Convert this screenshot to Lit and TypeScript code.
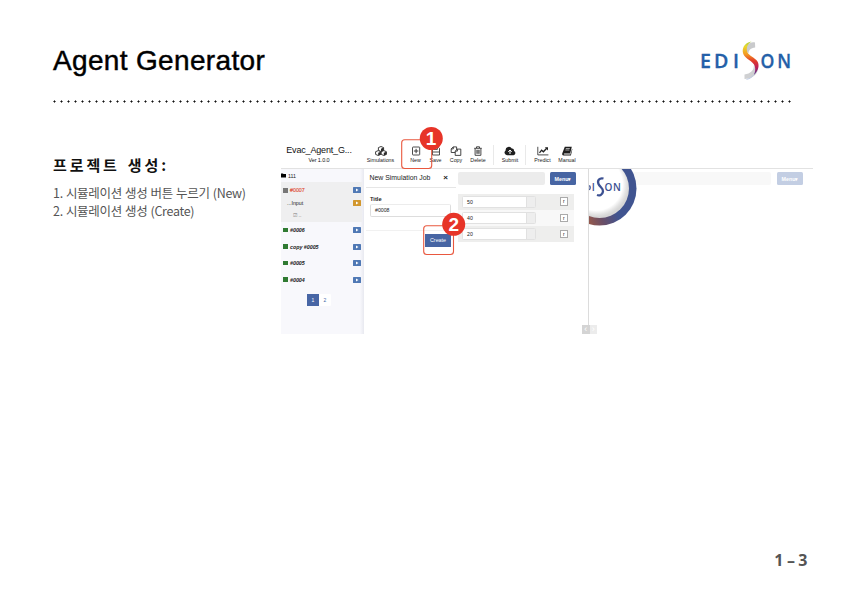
import { LitElement, html, svg, css } from "lit";
import { customElement } from "lit/decorators.js";

const FOLDER = svg`<path d="M0 1h4l1 1h5v7H0z"/>`;

const ICONS: Record<string, unknown> = {
  cubes: svg`<g fill="#fff" stroke="#2b2b2b" stroke-width=".9" stroke-linejoin="round"><path d="M6 .5l2.600 1.100v2.800L6 5.500 3.400 4.400V1.600z"/><path d="M3.200 4.600l2.600 1.100v2.700L3.200 9.500.6 8.400V5.700z"/><path d="M8.800 4.600l2.600 1.100v2.700L8.800 9.500 6.200 8.400V5.700z"/></g><path d="M3.400 1.600L6 2.700l2.600-1.100v2.800L6 5.500V2.700zM.6 5.700l2.600 1.100 2.600-1.100v2.700l-2.600 1.100V6.800zM6.200 5.700l2.600 1.100 2.600-1.100v2.700L8.800 9.500V6.800z" fill="#2b2b2b"/>`,
  plus: svg`<g fill="none" stroke="#3a3a3a"><rect x="2.500" y="1" width="7.200" height="8" rx=".6" stroke-width=".9"/><path d="M3.900 5h4.400M6.100 2.800v4.400" stroke-width="1"/></g>`,
  save: svg`<g fill="none" stroke="#3a3a3a" stroke-width=".9"><path d="M2.500 1h5.700l1.300 1.300V9h-7z"/><path d="M4 1v2.400h3.400V1M3 6h6"/></g>`,
  copy: svg`<g fill="#fff" stroke="#333" stroke-width=".9"><path d="M3.200.9h3.400v5.600H1.200V2.900zM3.300.9v2H1.200"/><path d="M7.300 3.100h3.500v6.300H5.200V5.100zM7.400 3.100v2H5.200"/></g>`,
  trash: svg`<g fill="none" stroke="#333" stroke-width=".9"><path d="M2.200 2.300h7.600M4.500 2V.8h3V2M3.100 2.500V9.300h5.800V2.500M4.900 3.800v4M6 3.800v4M7.100 3.800v4"/></g>`,
  cloud: svg`<path fill="#1f1f1f" d="M3 9.200A2.600 2.600 0 0 1 1.600 4.500 3.300 3.300 0 0 1 7.800 2.600 2.100 2.100 0 0 1 10 5a2.200 2.200 0 0 1-.4 4.200z"/><path d="M6 8V4.400M4.300 5.800L6 4l1.700 1.800" fill="none" stroke="#fff"/>`,
  chart: svg`<g fill="none" stroke="#222"><path d="M.8.8v8.100h10.600" stroke-width=".8"/><path d="M2.500 6.800l2.100-2.600 1.800 1.600 3.300-3.600" stroke-width="1.300"/></g><path d="M7.800 1.200h3.200v3.200z" fill="#222"/>`,
  book: svg`<path d="M3.800.7h7L9.200 7.400H3.400c-.8 0-.8 1 0 1h6L11 3l.4 0L9.900 9.400H2.600C1.200 9.400.9 8 1.400 6.900z" fill="#1f1f1f"/><path d="M4.800 2.500h4M4.400 4h4" stroke="#fff" stroke-width=".6"/>`,
};

const TOOLS: Array<[string, string] | null> = [
  ["cubes", "Simulations"],
  ["plus", "New"],
  ["save", "Save"],
  ["copy", "Copy"],
  ["trash", "Delete"],
  null,
  ["cloud", "Submit"],
  null,
  ["chart", "Predict"],
  ["book", "Manual"],
];

const JOBS = ["#0006", "copy #0005", "#0005", "#0004"];
const VALUES = ["50", "40", "20"];

@customElement("edison-logo")
class EdisonLogo extends LitElement {
  static styles = css`
    :host { display: block; width: 92px; height: 40px; }
    svg { display: block; overflow: visible; }
    text { font: 600 19.600px "Open Sans", sans-serif; fill: #2460a8; stroke: #2460a8; stroke-width: .3px; }
  `;
  render() {
    return html`<svg width="92" height="40" viewBox="0 0 92 40">
      <defs>
        <linearGradient id="s" x1="0" y1="0" x2="0" y2="1">
          <stop offset="0" stop-color="#a8cc3c" /><stop offset=".14" stop-color="#e9d92c" />
          <stop offset=".38" stop-color="#f39a24" /><stop offset=".58" stop-color="#e23a2a" />
          <stop offset=".78" stop-color="#b91d5c" /><stop offset="1" stop-color="#47308f" />
        </linearGradient>
      </defs>
      <text x="-1 12.900 31.900" y="27">EDI</text>
      <path d="M54 1.500c-6-1-10 3-9.300 8l3 3c-.5-3 2-5.500 6.500-6z" fill="#c9cacc" />
      <path d="M56 23c3 6-1 15-12.500 15v-4.500c6-1 9.500-4 9.300-9z" fill="#cfd0d2" />
      <path d="M50.500.6C43 2 40.500 8 42.300 13c2 5 9.700 7 11.500 12 .8 3 .5 6-1 9 4.500-4 6-9.500 3.700-13.500-2.500-4-8.500-5.500-10.200-9.500C45 7 46.500 3 50.500.6z" fill="url(#s)" />
      <path d="M52.500 34q-2.500 4-7 4.500" fill="none" stroke="#b6c5e2" stroke-width=".8" />
      <text transform="translate(59.600 27) scale(.9 1)" x="0 18.500" y="0">ON</text>
    </svg>`;
  }
}

@customElement("app-window")
class AppWindow extends LitElement {
  static styles = css`
    :host { display: block; width: 532px; height: 193px; font-family: "Liberation Sans", sans-serif; color: #222; }
    * { box-sizing: border-box; }
    div, span { white-space: nowrap; }
    svg { display: block; }
    .top { display: grid; grid-template-columns: 82px 1fr; height: 28px; border-bottom: 1px solid #e2e2e2; }
    .brand { text-align: center; padding: 4px 6px 0 0; font-size: 9px; line-height: 11px; color: #111; }
    .brand .name { letter-spacing: -.17px; }
    .brand .ver { font-size: 5.500px; line-height: 9px; letter-spacing: -.1px; }
    .tools { display: grid; grid-template-columns: 41px 23px 17px 24px 20px 10.500px 23px 8.500px 25px 24px; height: 27px; padding-top: 4.500px; }
    .tool { display: flex; flex-direction: column; align-items: center; font-size: 5.300px; line-height: 8px; color: #222; }
    .tool:first-child { padding-right: 6px; }
    .sep { justify-self: center; width: 1px; height: 20px; background: #e9e9e9; margin-top: -1px; }
    .body { display: grid; grid-template-columns: 83px 225px 1fr; height: 165px; }
    .side { background: linear-gradient(90deg, #f8f8fc 79px, #e8e9f0 83px); font-size: 5.300px; font-weight: 700; font-style: italic; }
    .line { display: flex; align-items: center; height: 16.450px; padding: 0 3px 0 2px; gap: 2.500px; }
    .line .grow { flex: 1; }
    .root { height: 13px; padding-left: 0; gap: 2px; font-style: normal; font-weight: 400; }
    .open { background: #efeff0; height: 40px; padding-top: 2px; margin-right: 2px; font-weight: 400; font-style: normal; }
    .open .line { height: 12.500px; padding-right: 1px; }
    .red { color: #e0533b; -webkit-text-stroke: .15px #e0533b; }
    .sq { width: 4.500px; height: 4.500px; background: #2f7a32; }
    .sq.dim { background: #777; }
    .indent { padding-left: 6px !important; }
    .deep { padding-left: 12px !important; color: #777; }
    .go { display: flex; align-items: center; justify-content: center; width: 8px; height: 6px; background: #5079b5; border-radius: .6px; }
    .go.warn { background: #d2972e; }
    .pages { display: flex; width: 24px; height: 12px; margin: 6px 0 0 26px; font-size: 5px; font-weight: 400; font-style: normal; line-height: 12px; text-align: center; background: #fff; border-radius: 1px; color: #4866a5; }
    .pages span { flex: 1; }
    .pages .on { background: #4866a5; color: #fff; }
    .main { display: grid; grid-template-columns: 94px 118px; background: #fff; border-right: 1.300px solid #dcdcdc; }
    .dlg { padding-left: 2px; }
    .dhead { display: flex; justify-content: space-between; align-items: center; height: 18.500px; padding: 0 8px 0 3.500px; font-size: 6.900px; width: 90px; border-bottom: 1px solid #e6e6e6; }
    .close { font-size: 8px; font-weight: 700; }
    .dbody { padding: 8px 0 0 4px; font-size: 5.500px; height: 43px; border-bottom: 1px solid #f1f1f1; width: 90px; }
    .label { font-weight: 700; line-height: 7px; font-size: 5.700px; }
    .field { width: 81px; height: 12.500px; margin-top: 1.500px; border: 1px solid #ddd; border-top-color: #ececec; border-radius: 2px; line-height: 10px; padding-left: 4px; font-size: 5.200px; }
    .btn { display: flex; align-items: center; justify-content: center; width: 26px; height: 13px; border-radius: 1.500px; background: #4765a3; color: #fff; font-size: 5.300px; font-weight: 700; }
    .create { margin: 3px 0 0 59px; border-radius: 0; font-weight: 400; }
    .bar { display: flex; justify-content: space-between; padding-top: 3px; }
    .grey { width: 87px; height: 13px; background: #ececec; border-radius: 2px; }
    .rows { margin-top: 8.500px; width: 116px; }
    .row { display: flex; align-items: center; justify-content: space-between; height: 16.200px; background: #eeeeed; padding: 0 6px 0 4px; }
    .row:nth-child(2) { background: #f8f8f8; }
    .group { display: flex; width: 74px; height: 12px; background: #fff; border: 1px solid #e1e1e1; border-radius: 1.500px; font-size: 5.200px; line-height: 10.500px; padding-left: 4px; justify-content: space-between; }
    .unit { width: 9.500px; background: #eeeeee; border-left: 1px solid #e1e1e1; }
    .tick { width: 8.500px; height: 8.500px; border: 1px solid #aaa; background: #fff; font-size: 5px; line-height: 6.500px; text-align: center; }
    .view { position: relative; overflow: hidden; background: #fff; display: flex; justify-content: flex-end; gap: 6px; padding: 3px 10px 0 0; }
    .view .grey { width: 160px; background: #f8f8f8; }
    .view .btn { background: #c3cee3; }
    .ring { position: absolute; left: 0; top: 0; }
    .ring text { font: 600 10px "Open Sans", sans-serif; fill: #3c5192; }
    .pager { position: absolute; left: 301px; top: 184px; display: flex; color: #fff; font-size: 9px; line-height: 8px; text-align: center; }
    .pager span { width: 7.500px; height: 9px; background: #d4d4d4; }
    .pager span + span { background: #ececec; }
    .frame { position: relative; }
    .marks { position: absolute; left: 0; top: -15px; }
    .marks rect { fill: none; stroke: #e9583f; stroke-width: 1.100; }
    .marks circle { fill: #e73428; }
    .marks text { fill: #fff; font: 700 19px "Liberation Sans", sans-serif; text-anchor: middle; }
  `;

  go(warn = false) {
    return html`<span class="go ${warn ? "warn" : ""}"><svg width="4" height="4" viewBox="0 0 4 4"><path d="M1 .5L3.500 2 1 3.500z" fill="#fff" /></svg></span>`;
  }

  render() {
    return html`<div class="frame">
      <div class="top">
        <div class="brand"><div class="name">Evac_Agent_G...</div><div class="ver">Ver 1.0.0</div></div>
        <div class="tools">
          ${TOOLS.map((t) => t
            ? html`<div class="tool"><svg width="12" height="10" viewBox="0 0 12 10">${ICONS[t[0]]}</svg><span>${t[1]}</span></div>`
            : html`<div class="sep"></div>`)}
        </div>
      </div>
      <div class="body">
        <div class="side">
          <div class="line root"><svg width="5" height="5" viewBox="0 0 10 10">${FOLDER}</svg>111</div>
          <div class="open">
            <div class="line"><span class="sq dim"></span><span class="grow red">#0007</span>${this.go()}</div>
            <div class="line indent"><span class="grow">...Input</span>${this.go(true)}</div>
            <div class="line deep"><span>☑ ..</span></div>
          </div>
          ${JOBS.map((j) => html`<div class="line"><span class="sq"></span><span class="grow">${j}</span>${this.go()}</div>`)}
          <div class="pages"><span class="on">1</span><span>2</span></div>
        </div>
        <div class="main">
          <div class="dlg">
            <div class="dhead"><span>New Simulation Job</span><span class="close">×</span></div>
            <div class="dbody"><div class="label">Title</div><div class="field">#0008</div></div>
            <div class="btn create">Create</div>
          </div>
          <div>
            <div class="bar"><div class="grey"></div><div class="btn">Menu▾</div></div>
            <div class="rows">
              ${VALUES.map((v) => html`<div class="row"><div class="group"><span>${v}</span><span class="unit"></span></div><div class="tick">r</div></div>`)}
            </div>
          </div>
        </div>
        <div class="view">
          <div class="grey"></div><div class="btn">Menu▾</div>
          <svg class="ring" width="60" height="60" viewBox="0 0 60 60">
            <defs>
              <linearGradient id="r" gradientUnits="userSpaceOnUse" x1="0" y1="55" x2="28" y2="44">
                <stop offset="0" stop-color="#96594b" /><stop offset=".45" stop-color="#6a4e66" /><stop offset="1" stop-color="#405490" />
              </linearGradient>
              <radialGradient id="w" gradientUnits="userSpaceOnUse" cx="7" cy="15" r="33">
                <stop offset=".8" stop-color="#fff" /><stop offset=".92" stop-color="#e4e4e4" /><stop offset="1" stop-color="#d6d6d6" />
              </radialGradient>
            </defs>
            <circle cx="10.500" cy="19.500" r="37" fill="url(#r)" />
            <circle cx="10.500" cy="19.500" r="29.500" fill="url(#w)" />
            <path d="M.4 16.500q1.600 2 0 4.500" fill="none" stroke="#3c5192" stroke-width="1.300" />
            <text x="2.800" y="22.300">I</text>
            <path d="M14.500 9.500c-4-1-6.500 2-5 5.500s5 4 4.500 7.500-3.500 4.500-6 3.500" fill="none" stroke="#3c5192" stroke-width="2.300" />
            <text x="15.500 24" y="22.300">ON</text>
          </svg>
        </div>
      </div>
      <div class="pager"><span>‹</span><span>›</span></div>
      <svg class="marks" width="200" height="132" viewBox="0 0 200 132">
        <rect x="120.700" y="13.700" width="30" height="28.800" rx="3" />
        <rect x="142.700" y="99.700" width="29.800" height="28.800" rx="3" />
        <circle cx="150.300" cy="12.500" r="11.500" /><circle cx="172.700" cy="98.300" r="11.500" />
        <text x="150" y="19.200">1</text><text x="172.700" y="104.900">2</text>
      </svg>
    </div>`;
  }
}

@customElement("app-root")
class AppRoot extends LitElement {
  static styles = css`
    :host { display: flex; flex-direction: column; box-sizing: border-box; width: 843px; height: 596px; background: #fff; padding: 41px 30px 26px 53px; overflow: hidden; }
    header { display: flex; justify-content: space-between; width: 740px; height: 59px; }
    h1 { margin: 4px 0 0; font: 400 28px/32px "Liberation Sans", sans-serif; letter-spacing: .34px; color: #000; -webkit-text-stroke: .45px #000; }
    .dots { width: 738px; height: 3px; background: radial-gradient(circle at 1.500px 1.500px, #111 .75px, transparent 1.350px) 0 0 / 7px 3px repeat-x; }
    main { display: grid; grid-template-columns: 228px 532px; margin-top: 38px; flex: 1; }
    .copy { font-family: "Noto Sans CJK KR", sans-serif; padding-top: 13px; white-space: nowrap; }
    h2 { margin: 0; font-size: 15px; line-height: 22px; font-weight: 700; letter-spacing: 2.900px; word-spacing: 1.700px; color: #111; }
    ol { margin: 8px 0 0; padding: 0; list-style: none; font-size: 12.500px; line-height: 18px; letter-spacing: -.3px; word-spacing: .6px; color: #555; }
    footer { align-self: flex-end; padding-right: 5.500px; font: 700 16px/20px "Open Sans", sans-serif; word-spacing: -.7px; color: #555; }
  `;
  render() {
    return html`
      <header><h1>Agent Generator</h1><edison-logo></edison-logo></header>
      <div class="dots"></div>
      <main>
        <section class="copy">
          <h2>프로젝트 생성:</h2>
          <ol><li>1. 시뮬레이션 생성 버튼 누르기 (New)</li><li>2. 시뮬레이션 생성 (Create)</li></ol>
        </section>
        <app-window></app-window>
      </main>
      <footer>1 – 3</footer>`;
  }
}
